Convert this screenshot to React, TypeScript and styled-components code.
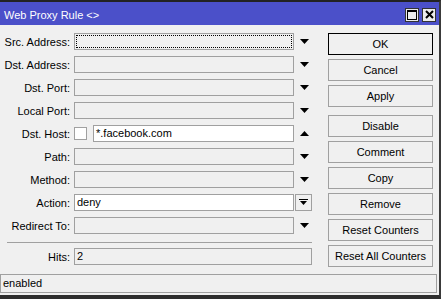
import React from 'react';
import styled, { createGlobalStyle } from 'styled-components';

const Global = createGlobalStyle`
  html, body { margin: 0; padding: 0; background: #f0f0f0; }
  body { font-family: "Liberation Sans", Arial, sans-serif; font-size: 11px; color: #000; }
  * { box-sizing: border-box; }
`;

const Window = styled.div`
  width: 441px;
  height: 299px;
  border-top: 2px solid #222;
  border-right: 2px solid #3a3a3a;
  border-bottom: 4px solid #2e2e2e;
  background: #f0f0f0;
  display: flex;
  flex-direction: column;
`;

const TitleBar = styled.div`
  height: 23px;
  flex: none;
  background: #4b50c9;
  display: flex;
  align-items: center;
  padding: 2px 3px 0 4px;
  color: #fff;
  font-size: 11px;
`;

const TitleText = styled.div`
  flex: 1;
`;

const TitleButtons = styled.div`
  display: flex;
  gap: 3px;
`;

const TitleButton = styled.div`
  width: 14px;
  height: 14px;
  border: 1px solid #333;
  background: #ececec;
  display: flex;
  align-items: center;
  justify-content: center;
`;

const Body = styled.div`
  flex: 1;
  display: flex;
  padding-top: 8px;
`;

const Form = styled.div`
  width: 316px;
  display: flex;
  flex-direction: column;
`;

const Row = styled.div`
  display: flex;
  align-items: center;
  height: 17px;
  margin-bottom: 6px;
`;

const Label = styled.div`
  width: 70px;
  margin-right: 4px;
  text-align: right;
  white-space: nowrap;
`;

const Field = styled.div<{ $w: number; $on?: boolean; $focus?: boolean }>`
  width: ${p => p.$w}px;
  height: 17px;
  border: 1px solid #a0a0a0;
  background: ${p => (p.$on ? '#fff' : '#f0f0f0')};
  padding: 0 2px;
  line-height: 15px;
  white-space: nowrap;
  overflow: hidden;
  ${p => (p.$focus ? 'outline: 1px dotted #000; outline-offset: -3px;' : '')}
`;

const ArrowCell = styled.div`
  width: 20px;
  height: 17px;
  display: flex;
  align-items: center;
  justify-content: center;
`;

const Check = styled.div`
  width: 13px;
  height: 13px;
  border: 1px solid #a0a0a0;
  background: #fff;
  margin-right: 6px;
`;

const DropButton = styled.div`
  width: 17px;
  height: 17px;
  margin-left: 1px;
  border: 1px solid #a0a0a0;
  background: #f0f0f0;
  display: flex;
  align-items: center;
  justify-content: center;
`;

const Separator = styled.div`
  margin: 2px 0 5px 7px;
  width: 305px;
  height: 1px;
  background: #a0a0a0;
`;

const Buttons = styled.div`
  margin-left: 12px;
  width: 105px;
  display: flex;
  flex-direction: column;
  gap: 4px;
`;

const Button = styled.div<{ $default?: boolean; $spaced?: boolean }>`
  height: 22px;
  border: 1px solid ${p => (p.$default ? '#000' : '#a0a0a0')};
  background: #f0f0f0;
  display: flex;
  align-items: center;
  justify-content: center;
  white-space: nowrap;
  ${p => (p.$spaced ? 'margin-top: 4px;' : '')}
`;

const StatusBar = styled.div`
  flex: none;
  height: 19px;
  margin: 0 2px 2px 0;
  border: 1px solid #a0a0a0;
  padding-left: 2px;
  line-height: 17px;
`;

const Down = () => (
  <svg width="9" height="5" viewBox="0 0 9 5"><path d="M0 0H9L4.5 5Z" fill="#000" /></svg>
);
const Up = () => (
  <svg width="9" height="5" viewBox="0 0 9 5"><path d="M0 5H9L4.5 0Z" fill="#000" /></svg>
);
const BarDown = () => (
  <svg width="9" height="7" viewBox="0 0 9 7"><rect x="0" y="0" width="9" height="1" fill="#000" /><path d="M1 2H8L4.5 6Z" fill="#000" /></svg>
);

const rows: { label: string; value?: string; on?: boolean; focus?: boolean }[] = [
  { label: 'Src. Address:', focus: true },
  { label: 'Dst. Address:' },
  { label: 'Dst. Port:' },
  { label: 'Local Port:' },
];

const rows2: { label: string }[] = [{ label: 'Path:' }, { label: 'Method:' }];

const buttons = ['OK', 'Cancel', 'Apply', 'Disable', 'Comment', 'Copy', 'Remove', 'Reset Counters', 'Reset All Counters'];

export default function App() {
  return (
    <>
      <Global />
      <Window>
        <TitleBar>
          <TitleText>Web Proxy Rule &lt;&gt;</TitleText>
          <TitleButtons>
            <TitleButton>
              <svg width="10" height="10" viewBox="0 0 10 10">
                <rect x="0.5" y="0.5" width="9" height="9" fill="none" stroke="#000" />
                <rect x="0" y="0" width="10" height="2" fill="#000" />
              </svg>
            </TitleButton>
            <TitleButton>
              <svg width="9" height="9" viewBox="0 0 9 9">
                <path d="M1 1L8 8M8 1L1 8" stroke="#000" strokeWidth="2" />
              </svg>
            </TitleButton>
          </TitleButtons>
        </TitleBar>
        <Body>
          <Form>
            {rows.map(r => (
              <Row key={r.label}>
                <Label>{r.label}</Label>
                <Field $w={220} $focus={r.focus} />
                <ArrowCell><Down /></ArrowCell>
              </Row>
            ))}
            <Row>
              <Label>Dst. Host:</Label>
              <Check />
              <Field $w={201} $on>*.facebook.com</Field>
              <ArrowCell><Up /></ArrowCell>
            </Row>
            {rows2.map(r => (
              <Row key={r.label}>
                <Label>{r.label}</Label>
                <Field $w={220} />
                <ArrowCell><Down /></ArrowCell>
              </Row>
            ))}
            <Row>
              <Label>Action:</Label>
              <Field $w={220} $on>deny</Field>
              <DropButton><BarDown /></DropButton>
            </Row>
            <Row>
              <Label>Redirect To:</Label>
              <Field $w={220} />
              <ArrowCell><Down /></ArrowCell>
            </Row>
            <Separator />
            <Row>
              <Label>Hits:</Label>
              <Field $w={238}>2</Field>
            </Row>
          </Form>
          <Buttons>
            {buttons.map(b => (
              <Button key={b} $default={b === 'OK'} $spaced={b === 'Disable'}>{b}</Button>
            ))}
          </Buttons>
        </Body>
        <StatusBar>enabled</StatusBar>
      </Window>
    </>
  );
}
